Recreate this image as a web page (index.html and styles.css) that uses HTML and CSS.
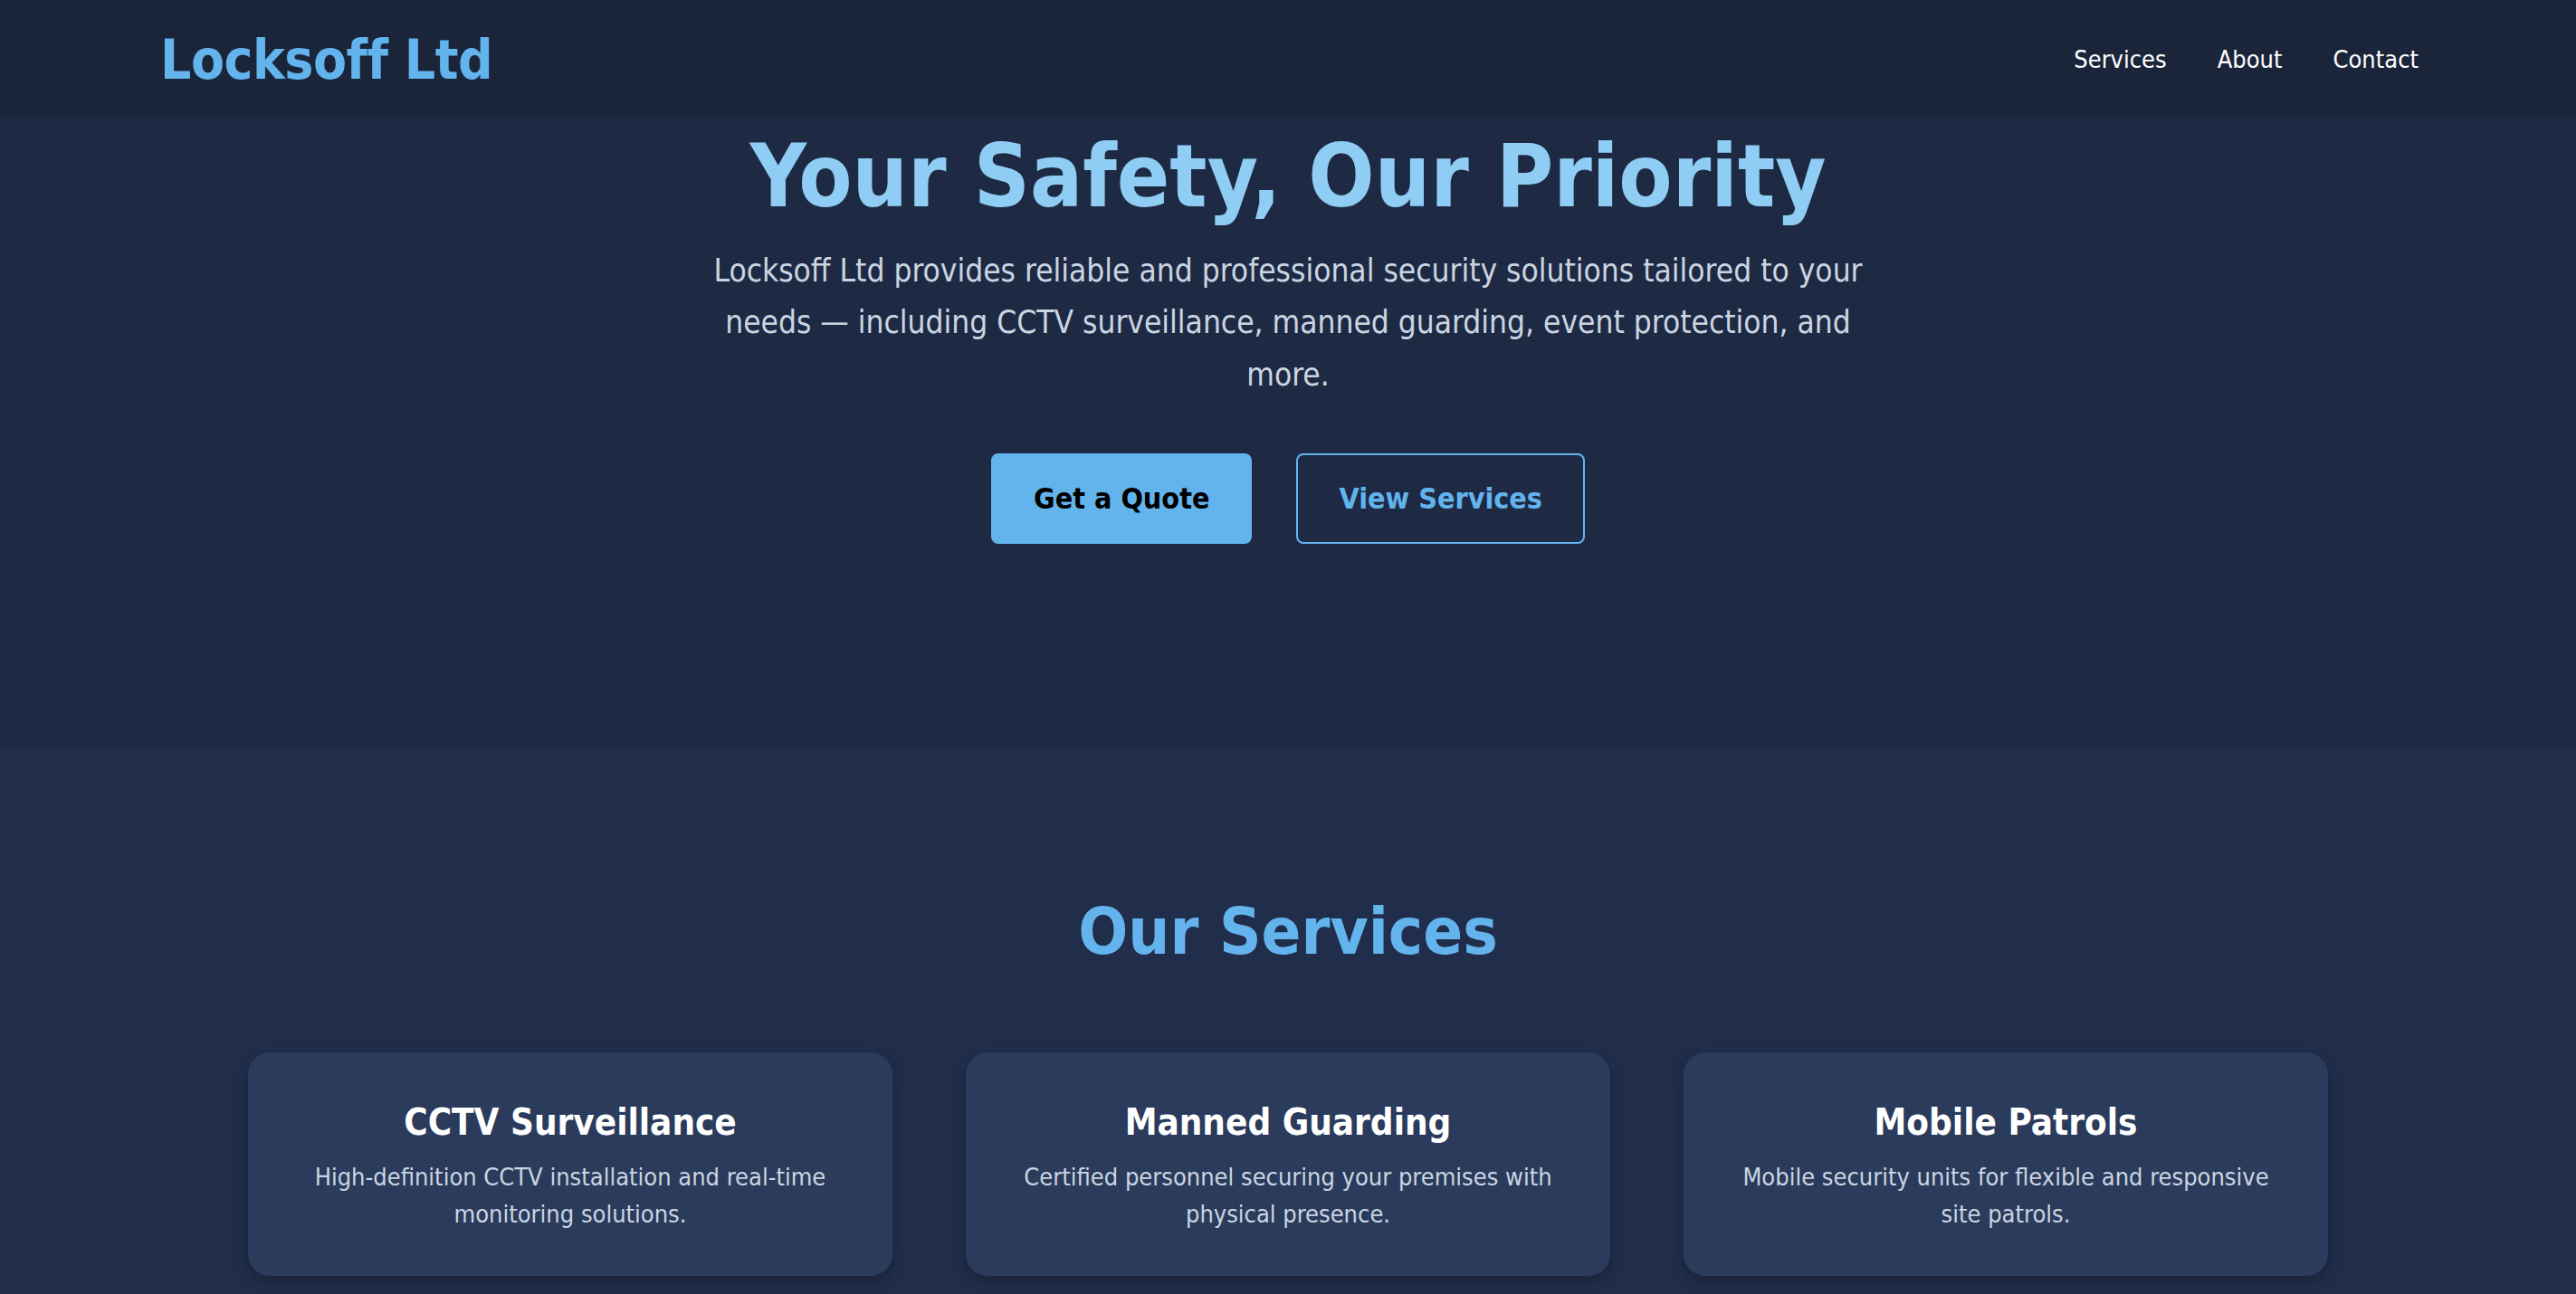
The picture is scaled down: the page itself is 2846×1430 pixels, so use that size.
FILE: index.html
```html
<!DOCTYPE html>
<html lang="en">
<head>
  <meta charset="UTF-8" />
  <meta name="viewport" content="width=device-width, initial-scale=1.0" />
  <title>Locksoff Ltd - Security Solutions</title>
  <link rel="stylesheet" href="styles.css">
</head>
<body>
  <header class="navbar">
    <div class="logo">Locksoff Ltd</div>
    <nav class="nav-links">
      <a href="#services">Services</a>
      <a href="#about">About</a>
      <a href="#contact">Contact</a>
    </nav>
  </header>

  <section class="hero">
    <h1>Your Safety, Our Priority</h1>
    <p>Locksoff Ltd provides reliable and professional security solutions tailored to your needs — including CCTV surveillance, manned guarding, event protection, and more.</p>
    <div class="hero-buttons">
      <a href="#contact" class="btn btn-primary">Get a Quote</a>
      <a href="#services" class="btn btn-outline">View Services</a>
    </div>
  </section>

  <section class="services" id="services">
    <h2>Our Services</h2>
    <div class="service-grid">
      <div class="service-card">
        <h3>CCTV Surveillance</h3>
        <p>High-definition CCTV installation and real-time monitoring solutions.</p>
      </div>
      <div class="service-card">
        <h3>Manned Guarding</h3>
        <p>Certified personnel securing your premises with physical presence.</p>
      </div>
      <div class="service-card">
        <h3>Mobile Patrols</h3>
        <p>Mobile security units for flexible and responsive site patrols.</p>
      </div>
    </div>
  </section>
</body>
</html>
```

FILE: styles.css
```css
body {
  margin: 0;
  font-family: "DejaVu Sans Condensed", "DejaVu Sans", sans-serif;
  font-stretch: condensed;
  background-color: #1e2a44;
  color: #ffffff;
}
.navbar {
  display: flex;
  justify-content: space-between;
  align-items: center;
  height: 131px;
  padding: 0 174px 0 177px;
  background: #1b253a;
}
.navbar .logo {
  font-size: 60px;
  font-weight: bold;
  letter-spacing: -0.5px;
  color: #63b3ed;
}
.nav-links {
  display: flex;
  gap: 56px;
}
.nav-links a {
  color: #ffffff;
  text-decoration: none;
  font-size: 27px;
}
.hero {
  text-align: center;
  padding: 8px 40px 228px;
  background: #1e2a44;
}
.hero h1 {
  margin: 0 0 20px;
  font-size: 96px;
  color: #90cdf4;
}
.hero p {
  max-width: 1290px;
  margin: 0 auto 58px;
  font-size: 35px;
  line-height: 1.64;
  color: #cbd5e1;
}
.hero-buttons {
  display: flex;
  justify-content: center;
  gap: 49px;
}
.btn {
  display: inline-block;
  padding: 24px 45px;
  border-radius: 8px;
  font-size: 32px;
  font-weight: bold;
  line-height: 1.5;
  text-decoration: none;
}
.btn-primary {
  background: #63b3ed;
  color: #000000;
  border: 2px solid #63b3ed;
}
.btn-outline {
  background: transparent;
  color: #63b3ed;
  border: 2px solid #63b3ed;
}
.services {
  text-align: center;
  padding: 158px 40px 20px;
  background: #212e4b;
}
.services h2 {
  margin: 0 0 92px;
  font-size: 72px;
  color: #63b3ed;
}
.service-grid {
  display: grid;
  grid-template-columns: repeat(3, 712px);
  justify-content: center;
  gap: 81px;
}
.service-card {
  background: #2a3b5c;
  border-radius: 24px;
  padding: 54px 52px 48px;
  box-shadow: 0 6px 16px rgba(0, 0, 0, 0.25);
}
.service-card h3 {
  margin: 0 0 18px;
  font-size: 40px;
}
.service-card p {
  margin: 0;
  font-size: 27px;
  line-height: 1.5;
  color: #cbd5e1;
}
```
